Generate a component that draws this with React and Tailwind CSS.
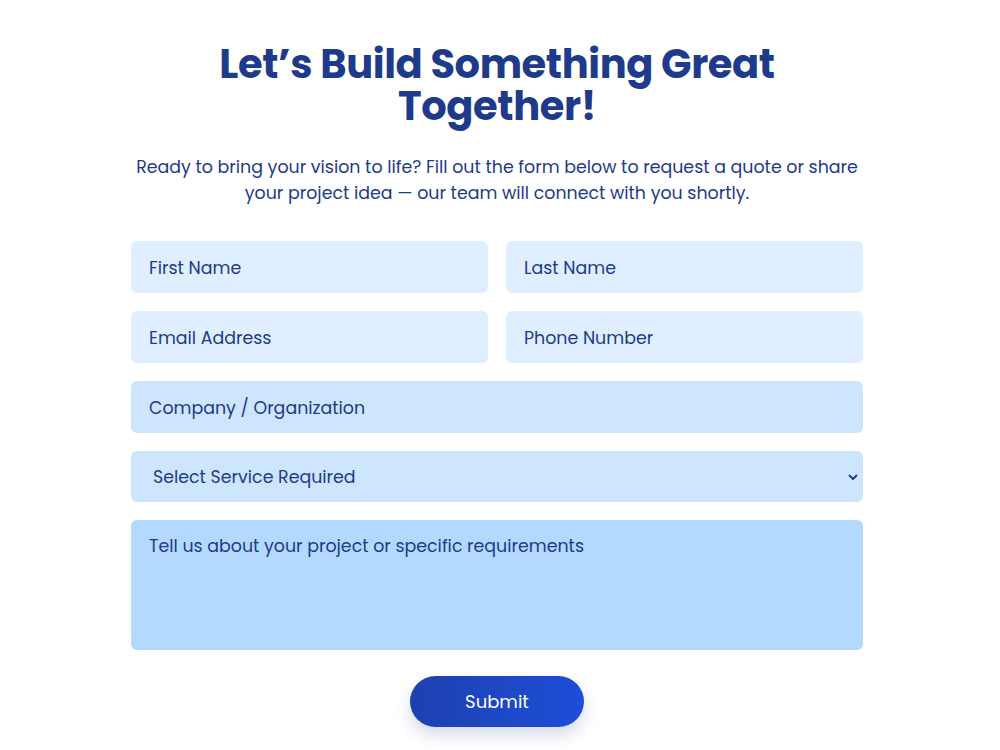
import { useState } from "react";

const font = { fontFamily: "Poppins, Inter, 'Noto Sans', sans-serif" };

export default function App() {
  const [service, setService] = useState("");

  return (
    <div className="min-h-screen bg-white flex flex-col items-center pt-[43px] pr-[6px]" style={font}>
      {/* Heading */}
      <h1 className="text-[40px] leading-[42px] font-bold text-[#1e3a8a] text-center tracking-[-0.4px]">
        Let’s Build Something Great
        <br />
        Together!
      </h1>
      <p className="mt-[27px] text-[17.4px] leading-[26px] text-[#1e3a8a] text-center max-w-[760px]">
        Ready to bring your vision to life? Fill out the form below to request a quote or share
        <br />
        your project idea — our team will connect with you shortly.
      </p>

      {/* Form */}
      <form className="mt-[35px] w-[732px] flex flex-col gap-[18px]" onSubmit={(e) => e.preventDefault()}>
        <div className="grid grid-cols-2 gap-[18px]">
          <input
            placeholder="First Name"
            className="h-[52px] rounded-md bg-[#dfefff] pl-[18px] pr-[17px] pt-[2px] text-[17.4px] text-[#1e3a8a] placeholder:text-[#1e3a8a] outline-none"
          />
          <input
            placeholder="Last Name"
            className="h-[52px] rounded-md bg-[#dfefff] pl-[18px] pr-[17px] pt-[2px] text-[17.4px] text-[#1e3a8a] placeholder:text-[#1e3a8a] outline-none"
          />
        </div>
        <div className="grid grid-cols-2 gap-[18px]">
          <input
            placeholder="Email Address"
            className="h-[52px] rounded-md bg-[#dfefff] pl-[18px] pr-[17px] pt-[2px] text-[17.4px] text-[#1e3a8a] placeholder:text-[#1e3a8a] outline-none"
          />
          <input
            placeholder="Phone Number"
            className="h-[52px] rounded-md bg-[#dfefff] pl-[18px] pr-[17px] pt-[2px] text-[17.4px] text-[#1e3a8a] placeholder:text-[#1e3a8a] outline-none"
          />
        </div>
        <input
          placeholder="Company / Organization"
          className="h-[52px] rounded-md bg-[#cde6fd] pl-[18px] pr-[17px] pt-[2px] text-[17.4px] text-[#1e3a8a] placeholder:text-[#1e3a8a] outline-none"
        />
        <div className="relative">
          <select
            value={service}
            onChange={(e) => setService(e.target.value)}
            className="w-full h-[51px] rounded-md bg-[#cde6fd] pl-[22px] pr-10 pt-[2px] text-[17.4px] text-[#1e3a8a] outline-none appearance-none"
          >
            <option value="">Select Service Required</option>
            <option value="web">Web Development</option>
            <option value="mobile">Mobile Apps</option>
            <option value="design">UI/UX Design</option>
          </select>
          <svg
            className="absolute right-[5px] top-1/2 -translate-y-1/2 pointer-events-none"
            width="10"
            height="10"
            viewBox="0 0 10 10"
            fill="none"
          >
            <path d="M1.5 3.5 L5 7 L8.5 3.5" stroke="#1e3a8a" strokeWidth="1.8" strokeLinecap="round" strokeLinejoin="round" />
          </svg>
        </div>
        <textarea
          placeholder="Tell us about your project or specific requirements"
          className="h-[130px] rounded-md bg-[#b3d9ff] pl-[18px] pr-[17px] py-[13px] text-[17.4px] leading-[26px] text-[#1e3a8a] placeholder:text-[#1e3a8a] outline-none resize-none"
        />
        <div className="flex justify-center mt-[8px]">
          <button
            type="submit"
            className="w-[174px] h-[51px] rounded-full bg-gradient-to-r from-[#1e40af] to-[#1d4ed8] text-white text-[18px] shadow-[0_8px_16px_rgba(30,58,138,0.18)]"
          >
            Submit
          </button>
        </div>
      </form>
    </div>
  );
}
